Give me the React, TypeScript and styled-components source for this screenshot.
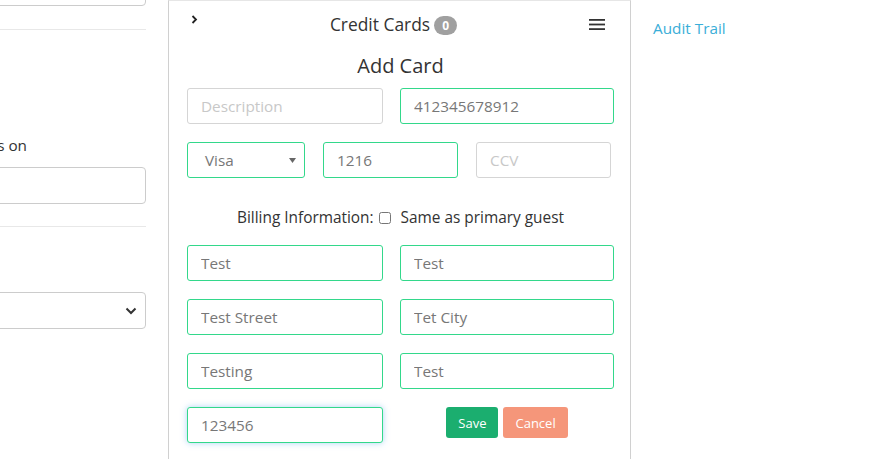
import React from "react";
import styled, { createGlobalStyle } from "styled-components";

const Global = createGlobalStyle`
  html, body { margin: 0; padding: 0; background: #fff; }
  body { font-family: "Open Sans", "Liberation Sans", sans-serif; color: #333; overflow: hidden; }
  * { box-sizing: border-box; }
`;

const Page = styled.div`
  display: grid;
  grid-template-columns: 146px 463px 1fr;
  column-gap: 22px;
  height: 459px;
  overflow: hidden;
`;

const LeftCol = styled.div`
  display: flex;
  flex-direction: column;
  overflow: hidden;
`;

const LeftInput = styled.div<{ $top?: number }>`
  height: 37px;
  margin-top: ${(p) => p.$top ?? 0}px;
  margin-left: -10px;
  border: 1px solid #ccc;
  border-radius: 4px;
  background: #fff;
  flex-shrink: 0;
`;

const Rule = styled.div<{ $top: number }>`
  height: 1px;
  background: #e8e8e8;
  margin-top: ${(p) => p.$top}px;
  flex-shrink: 0;
`;

const CutLabel = styled.div`
  width: 27px;
  height: 21px;
  margin-top: 105px;
  display: flex;
  justify-content: flex-end;
  white-space: nowrap;
  font-size: 15.3px;
  line-height: 21px;
  color: #333;
  flex-shrink: 0;
`;

const LeftSelect = styled.div<{ $top: number }>`
  height: 37px;
  margin-top: ${(p) => p.$top}px;
  margin-left: -10px;
  border: 1px solid #ccc;
  border-radius: 4px;
  display: flex;
  align-items: center;
  justify-content: flex-end;
  padding-right: 8px;
  flex-shrink: 0;
`;

const Panel = styled.section`
  border-left: 1px solid #d0d0d0;
  border-right: 1px solid #d0d0d0;
  border-top: 1px solid #e6e6e6;
  padding: 0 16px 0 18px;
  display: flex;
  flex-direction: column;
`;

const Header = styled.header`
  height: 46px;
  display: flex;
  align-items: center;
  justify-content: space-between;
  margin: 0 9px 0 4px;
`;

const IconBtn = styled.span<{ $dy?: number }>`
  display: flex;
  margin-top: ${(p) => p.$dy ?? 0}px;
  color: #222;
`;

const Title = styled.h2`
  margin: 0;
  font-size: 17.4px;
  font-weight: 400;
  color: #333;
  display: flex;
  align-items: center;
  gap: 4px;
  line-height: 23px;
`;

const Badge = styled.span`
  display: inline-flex;
  align-items: center;
  justify-content: center;
  min-width: 23px;
  height: 19px;
  padding: 0 7px;
  border-radius: 10px;
  background: #a0a0a0;
  color: #fff;
  font-size: 12px;
  font-weight: 700;
  margin-top: 3px;
`;

const SubTitle = styled.h3`
  margin: 7px 0 0;
  text-align: center;
  font-size: 20px;
  font-weight: 400;
  line-height: 24px;
  color: #333;
`;

const Form = styled.div`
  margin-top: 10px;
  display: flex;
  flex-direction: column;
`;

const Row = styled.div<{ $cols: string; $gap: number; $mt?: number }>`
  display: grid;
  grid-template-columns: ${(p) => p.$cols};
  column-gap: ${(p) => p.$gap}px;
  margin-top: ${(p) => p.$mt ?? 0}px;
`;

const Field = styled.input<{ $valid?: boolean; $focus?: boolean }>`
  height: 36px;
  width: 100%;
  border: 1px solid ${(p) => (p.$valid ? "#33d88b" : "#d5d5d5")};
  border-radius: 3px;
  padding: 0 12px 0 13px;
  font-family: "Open Sans", "Liberation Sans", sans-serif;
  font-size: 15.3px;
  color: #777;
  background: #fff;
  outline: none;
  box-shadow: ${(p) => (p.$focus ? "0 0 6px rgba(102, 175, 233, 0.55)" : "none")};
  &::placeholder { color: #c8c8c8; }
`;

const SelectBox = styled.div`
  height: 36px;
  border: 1px solid #33d88b;
  border-radius: 3px;
  display: flex;
  align-items: center;
  padding: 0 8px 0 17px;
  background: #fff;
`;

const SelectText = styled.span`
  flex: 1;
  font-size: 15.3px;
  color: #777;
`;

const Billing = styled.div`
  margin: 29px 0 16px;
  display: flex;
  justify-content: center;
  align-items: center;
  font-size: 15.4px;
  line-height: 22px;
  color: #333;
`;

const Check = styled.input`
  width: 12px;
  height: 12px;
  margin: 0 10px 0 5px;
`;

const Actions = styled.div`
  display: flex;
  justify-content: center;
  align-items: flex-start;
  gap: 5px;
`;

const Btn = styled.button<{ $bg: string }>`
  height: 31px;
  padding: 0 12px;
  border: none;
  border-radius: 3px;
  background: ${(p) => p.$bg};
  color: #fff;
  font-family: "Open Sans", "Liberation Sans", sans-serif;
  font-size: 13px;
`;

const RightCol = styled.aside`
  padding: 17px 0 0 0;
`;

const Link = styled.a`
  font-size: 15.3px;
  color: #3aaed8;
  text-decoration: none;
  line-height: 22px;
`;

const Chevron = () => (
  <svg width="7" height="9" viewBox="0 0 7 9">
    <path d="M1.5 1 L5 4.5 L1.5 8" fill="none" stroke="#222" strokeWidth="1.8" />
  </svg>
);

const Burger = () => (
  <svg width="16" height="11" viewBox="0 0 16 11">
    <rect x="0" y="0" width="16" height="1.8" fill="#333" />
    <rect x="0" y="4.6" width="16" height="1.8" fill="#333" />
    <rect x="0" y="9.2" width="16" height="1.8" fill="#333" />
  </svg>
);

const Caret = () => (
  <svg width="7" height="5" viewBox="0 0 7 5">
    <path d="M0 0 H7 L3.5 5 Z" fill="#666" />
  </svg>
);

const DownChevron = () => (
  <svg width="12" height="8" viewBox="0 0 12 8">
    <path d="M1.5 1.5 L6 6 L10.5 1.5" fill="none" stroke="#333" strokeWidth="2" />
  </svg>
);

export default function App() {
  return (
    <>
      <Global />
      <Page>
        <LeftCol>
          <LeftInput $top={-31} />
          <Rule $top={23} />
          <CutLabel>Send confirmation emails on</CutLabel>
          <LeftInput $top={11} />
          <Rule $top={22} />
          <LeftSelect $top={65}>
            <DownChevron />
          </LeftSelect>
        </LeftCol>

        <Panel>
          <Header>
            <IconBtn $dy={-9}>
              <Chevron />
            </IconBtn>
            <Title>
              Credit Cards <Badge>0</Badge>
            </Title>
            <IconBtn>
              <Burger />
            </IconBtn>
          </Header>
          <SubTitle>Add Card</SubTitle>
          <Form>
            <Row $cols="196px 1fr" $gap={17}>
              <Field placeholder="Description" />
              <Field $valid defaultValue="412345678912" />
            </Row>
            <Row $cols="118px 135px 135px" $gap={18} $mt={18}>
              <SelectBox>
                <SelectText>Visa</SelectText>
                <Caret />
              </SelectBox>
              <Field $valid defaultValue="1216" />
              <Field placeholder="CCV" />
            </Row>
            <Billing>
              Billing Information:
              <Check type="checkbox" />
              Same as primary guest
            </Billing>
            <Row $cols="196px 1fr" $gap={17}>
              <Field $valid defaultValue="Test" />
              <Field $valid defaultValue="Test" />
            </Row>
            <Row $cols="196px 1fr" $gap={17} $mt={18}>
              <Field $valid defaultValue="Test Street" />
              <Field $valid defaultValue="Tet City" />
            </Row>
            <Row $cols="196px 1fr" $gap={17} $mt={18}>
              <Field $valid defaultValue="Testing" />
              <Field $valid defaultValue="Test" />
            </Row>
            <Row $cols="196px 1fr" $gap={17} $mt={18}>
              <Field $valid $focus defaultValue="123456" />
              <Actions>
                <Btn $bg="#1bae6f">Save</Btn>
                <Btn $bg="#f5967a">Cancel</Btn>
              </Actions>
            </Row>
          </Form>
        </Panel>

        <RightCol>
          <Link href="#">Audit Trail</Link>
        </RightCol>
      </Page>
    </>
  );
}
